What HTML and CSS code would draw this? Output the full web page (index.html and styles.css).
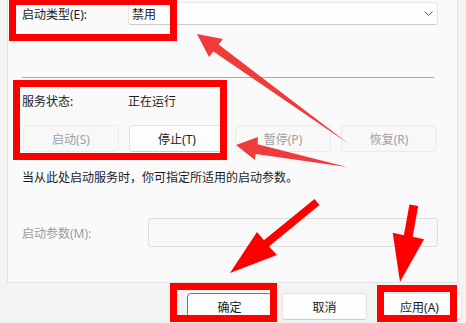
FILE: index.html
```html
<!DOCTYPE html>
<html lang="zh-CN">
<head>
  <meta charset="UTF-8">
  <title>服务属性</title>
  <link rel="stylesheet" href="styles.css">
</head>
<body>
  <div class="panel">
    <!-- 启动类型 -->
    <div class="row row-type">
      <span class="label">启动类型(E):</span>
      <div class="combo">
        <span>禁用</span>
        <svg class="chevron" width="9" height="5" viewBox="0 0 9 5"><path d="M0.5 0.5 L4.5 4.5 L8.5 0.5" fill="none" stroke="#5a5a5a" stroke-width="1"/></svg>
      </div>
    </div>

    <div class="sep"></div>

    <!-- 服务状态 -->
    <div class="row row-status">
      <span class="label">服务状态:</span>
      <span>正在运行</span>
    </div>

    <div class="btn-row">
      <button class="btn" disabled>启动(S)</button>
      <button class="btn">停止(T)</button>
      <button class="btn" disabled>暂停(P)</button>
      <button class="btn" disabled>恢复(R)</button>
    </div>

    <p class="desc">当从此处启动服务时，你可指定所适用的启动参数。</p>

    <div class="row row-param">
      <span class="label label-param">启动参数(M):</span>
      <div class="input"></div>
    </div>
  </div>

  <div class="footer">
    <button class="btn btn-foot btn-default">确定</button>
    <button class="btn btn-foot">取消</button>
    <button class="btn btn-foot">应用(A)</button>
  </div>

  <!-- annotation marks -->
  <div class="mark mark-type"></div>
  <div class="mark mark-status"></div>
  <div class="mark mark-ok"></div>
  <div class="mark mark-apply"></div>

  <svg class="arrows" width="466" height="323" viewBox="0 0 466 323">
    <polygon class="arrow-soft" points="197,34 223,39 218.6,44.4 349,144 213.4,51.6 209,57"/>
    <polygon class="arrow-soft" points="236,145 258,137 257.6,144.2 347,167 255.6,154 255,160"/>
    <polygon class="arrow-hard" points="230,273 257,232 263.9,240.2 314.5,198.9 319.5,205.1 268.9,246.4 277,255"/>
    <polygon class="arrow-hard" points="400,282 392.7,232.7 403.9,235.2 409.4,204.5 418.2,206.1 412.7,236.8 424,239.3"/>
  </svg>
</body>
</html>
```

FILE: styles.css
```css
/* Dialog Styles */
body {
  margin: 0;
  width: 466px;
  height: 323px;
  overflow: hidden;
  position: relative;
  background-color: #f3f3f3;
  font-family: "Noto Sans", "Noto Sans CJK SC", sans-serif;
  font-size: 12px;
  color: #1a1a1a;
}

.panel {
  box-sizing: border-box;
  width: 451px;
  height: 283px;
  margin-left: 7px;
  padding: 2px 14px 0;
  background-color: #fafafa;
  border: 1px solid #e3e3e3;
  border-top: none;
}

.row {
  display: flex;
  align-items: center;
}

.label {
  width: 106px;
  flex-shrink: 0;
}

.row-type {
  height: 23px;
}

.combo {
  box-sizing: border-box;
  width: 310px;
  height: 23px;
  display: flex;
  align-items: center;
  justify-content: space-between;
  padding: 0 4px 0 3px;
  background: #fefefe;
  border: 1px solid #e6e6e6;
  border-bottom-color: #cdcdcd;
  border-radius: 3px;
}

.sep {
  width: 412px;
  height: 1px;
  margin-top: 52px;
  background-color: #a9a9a9;
}

.row-status {
  height: 17px;
  margin-top: 14px;
}

.btn-row {
  display: grid;
  grid-template-columns: repeat(4, 96px);
  gap: 10px;
  margin-top: 16px;
  margin-left: 1px;
}

.btn {
  box-sizing: border-box;
  height: 27px;
  padding: 0;
  font-family: inherit;
  font-size: 12px;
  color: #1a1a1a;
  background: #fdfdfd;
  border: 1px solid #e2e2e2;
  border-bottom-color: #cccccc;
  border-radius: 4px;
}

.btn:disabled {
  color: #a0a0a0;
  background: #f8f8f8;
  border-color: #ebebeb;
}

.desc {
  margin: 17px 0 0;
  line-height: 17px;
}

.row-param {
  margin-top: 32px;
}

.label-param {
  width: 126px;
  color: #9c9c9c;
}

.input {
  box-sizing: border-box;
  width: 290px;
  height: 29px;
  background: #f8f8f8;
  border: 1px solid #dcdcdc;
  border-radius: 3px;
}

.footer {
  display: flex;
  justify-content: flex-end;
  gap: 10px;
  margin-top: 10px;
  padding-right: 4px;
}

.btn-foot {
  width: 85px;
}

.btn-default {
  border-color: #3f7fc6;
}

/* red annotation boxes over the dialog */
.mark {
  position: absolute;
  box-sizing: border-box;
  border: 7px solid #ff0000;
}

.mark-type   { left: 9px;   top: -2px;  width: 168px; height: 43px; }
.mark-status { left: 13px;  top: 80px;  width: 214px; height: 80px; }
.mark-ok     { left: 170px; top: 283px; width: 107px; height: 39px; }
.mark-apply  { left: 377px; top: 285px; width: 80px;  height: 37px; }

.arrows {
  position: absolute;
  left: 0;
  top: 0;
  pointer-events: none;
}

.arrow-soft { fill: #ef3b3b; }
.arrow-hard { fill: #ff0000; }
```
